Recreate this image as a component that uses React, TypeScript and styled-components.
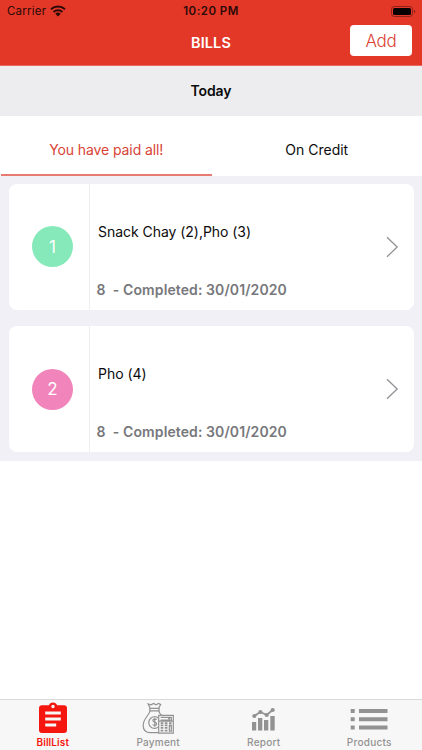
import React from "react";
import styled, { createGlobalStyle } from "styled-components";

const GlobalStyle = createGlobalStyle`
  * { box-sizing: border-box; }
  body { margin: 0; background: #fff; font-family: Inter, "Liberation Sans", sans-serif; }
`;

const Screen = styled.div`
  display: flex;
  flex-direction: column;
  width: 422px;
  height: 750px;
  overflow: hidden;
  background: #fff;
  color: #0b0b0c;
  white-space: nowrap;
`;

const Header = styled.header`
  height: 66px;
  background: #e33827;
  border-bottom: 1px solid #e8695d;
`;

const StatusBar = styled.div`
  display: grid;
  grid-template-columns: 1fr auto 1fr;
  align-items: center;
  height: 22px;
  padding: 0 6px 0 7px;
  color: #2b0a07;
`;

const Carrier = styled.div`
  display: flex;
  align-items: center;
  gap: 4px;
  font-size: 11.5px;
  letter-spacing: 0.22px;
`;

const Clock = styled.div`
  margin-right: 1px;
  font-size: 11.5px;
  font-weight: 600;
  letter-spacing: 0.45px;
`;

const BatterySlot = styled.div`
  display: flex;
  justify-content: flex-end;
`;

const NavBar = styled.div`
  display: grid;
  grid-template-columns: 1fr auto 1fr;
  height: 43px;
  padding: 3px 10px 0 0;
`;

const NavTitle = styled.h1`
  grid-column: 2;
  margin: 0 0 0 10px;
  padding-top: 9px;
  font-size: 14.5px;
  line-height: 18px;
  font-weight: 600;
  letter-spacing: 0.1px;
  color: #fff;
`;

const Button = styled.button`
  border: 0;
  padding: 0;
  background: none;
  font-family: inherit;
`;

const AddButton = styled(Button)`
  justify-self: end;
  width: 62px;
  height: 31px;
  padding-top: 1px;
  border-radius: 4px;
  background: #fff;
  color: #dc4134;
  font-size: 17px;
  font-weight: 300;
  letter-spacing: -0.2px;
`;

const DateBar = styled.div`
  display: flex;
  align-items: center;
  justify-content: center;
  height: 50px;
  padding-bottom: 1px;
  background: #ededef;
  font-size: 14px;
  font-weight: 600;
  letter-spacing: -0.1px;
`;

const Tabs = styled.div`
  display: grid;
  grid-template-columns: 1fr 1fr;
  height: 60px;
  padding-left: 1px;
`;

const Tab = styled(Button)<{ $active?: boolean }>`
  padding-top: 9px;
  font-size: 14px;
  letter-spacing: ${(p) => (p.$active ? "-0.1px" : "0")};
  color: ${(p) => (p.$active ? "#d94336" : "#0b0b0c")};
  border-bottom: 2px solid ${(p) => (p.$active ? "#e77a71" : "transparent")};
`;

const BillList = styled.main`
  display: flex;
  flex-direction: column;
  gap: 16.5px;
  padding: 7.5px 8.5px 8.5px;
  background: #f1f0f7;
`;

const Card = styled.article`
  display: grid;
  grid-template-columns: 81.5px 1fr 33.5px;
  height: 126px;
  border-radius: 8px;
  background: #fff;
`;

const NumberCell = styled.div`
  display: flex;
  align-items: center;
  padding-left: 23.5px;
  border-right: 1px solid #efeff2;
`;

const NumberBadge = styled.div<{ $color: string }>`
  display: flex;
  align-items: center;
  justify-content: center;
  width: 41px;
  height: 41px;
  border-radius: 50%;
  background: ${(p) => p.$color};
  color: #fff;
  font-size: 17px;
  font-weight: 400;
`;

const BillText = styled.div`
  display: flex;
  flex-direction: column;
  justify-content: space-between;
  padding: 39px 0 11px 6.5px;
`;

const Items = styled.div`
  padding-left: 1.5px;
  font-size: 14px;
  line-height: 18px;
  letter-spacing: -0.04px;
`;

const Completed = styled.div`
  white-space: pre;
  font-size: 14px;
  line-height: 18px;
  font-weight: 600;
  letter-spacing: 0.1px;
  color: #77777c;
`;

const ArrowCell = styled.div`
  display: flex;
  align-items: center;
  padding-left: 6px;
`;

const TabBar = styled.nav`
  display: grid;
  grid-template-columns: repeat(4, 1fr);
  height: 51px;
  margin-top: auto;
  border-top: 1px solid #d9d9da;
  background: #f7f7f7;
`;

const NavItem = styled(Button)<{ $active?: boolean }>`
  display: flex;
  flex-direction: column;
  align-items: center;
  gap: 2px;
  padding-top: 2px;
  color: ${(p) => (p.$active ? "#f5170f" : "#929292")};
`;

const NavLabel = styled.span<{ $active?: boolean }>`
  font-size: 10px;
  line-height: 12px;
  font-weight: ${(p) => (p.$active ? 600 : 500)};
  letter-spacing: ${(p) => (p.$active ? "0.1px" : "0.25px")};
`;

const Wifi = () => (
  <svg width="16" height="12" viewBox="0 0 16 12" fill="none" stroke="currentColor" strokeWidth="2">
    <path d="M1 4.3a10.3 10.3 0 0 1 14 0M3.6 7a6.5 6.5 0 0 1 8.8 0" />
    <path d="M5.3 8.8a4 4 0 0 1 5.4 0L8 11.6Z" fill="currentColor" stroke="none" />
  </svg>
);

const Battery = () => (
  <svg width="25" height="11" viewBox="0 0 25 11">
    <rect x=".5" y=".5" width="21" height="10" rx="2.8" fill="none" stroke="#8c2219" />
    <rect x="2" y="2" width="18" height="7" rx="1.5" fill="#080000" />
    <path d="M23 3.8q1.3.4 1.3 1.7T23 7.2Z" fill="#8c2219" />
  </svg>
);

const Chevron = () => (
  <svg width="13" height="22" viewBox="0 0 13 22" fill="none" stroke="#929296" strokeWidth="1.3">
    <path d="M1 1.2 11.2 11 1 20.8" />
  </svg>
);

const ClipboardIcon = () => (
  <svg width="28" height="32" viewBox="0 0 28 32">
    <path
      fill="currentColor"
      fillRule="evenodd"
      d="M3 3.2h7C10.5 1.4 12 .4 14 .4s3.500 1 4 2.800h7a3 3 0 0 1 3 3V28a3 3 0 0 1-3 3H3a3 3 0 0 1-3-3V6.200a3 3 0 0 1 3-3ZM14 2.800a1.700 1.700 0 1 0 0 3.400 1.700 1.700 0 0 0 0-3.400ZM6.200 9.500v3h15.600v-3Zm0 6v3h15.600v-3Zm0 6v3h11v-3Z"
    />
  </svg>
);

const PaymentIcon = () => (
  <svg width="32" height="32" viewBox="-0.4 0 32.4 32" fill="none" stroke="currentColor" strokeWidth="1.2">
    <path d="M7.900 6.200 5.800 1.800l3 .8 2.500-1.300 2.500 1.300 2.600-1.300 2.100 1.100-2.200 3.800ZM7.500 6.200h9.400v2.500H7.500Z" />
    <path d="M7.800 8.700C6.900 13.300.8 16.400.8 23.500c0 5.400 2.600 7.300 7.300 7.300h8.200M16.500 8.700c.5 2.100 1.600 3.300 2.900 4.500" />
    <path d="M16.300 16.200A5.900 5.900 0 1 0 16.300 25" />
    <path d="M14.500 17.700c-.6-.8-3.900-1.100-3.900.8 0 2.200 3.900 1.200 3.900 3.500 0 1.900-3.300 1.800-4.200.6M12.500 15.800v9" />
    <path fill="#f7f7f7" d="M16.500 13.400h14.800v17.900H16.500Z" />
    <path d="M18.500 15.300h10.800v2.900H18.500M26 16.700h2M16.500 19.200h14.800" />
    <path strokeWidth="1.700" strokeDasharray="2.700 1.500" d="M18.500 21.200h11M18.500 23.400h11M18.500 26h7.500M18.500 28.700h7.500" />
    <path d="M27.300 24h2v5.300h-2Z" />
  </svg>
);

const ReportIcon = () => (
  <svg width="23" height="32" viewBox="0 0 23 32" fill="currentColor">
    <path d="M0 20h4.200v8.500H0ZM6 16h4.300v12.500H6ZM12 18h4.300v10.500H12ZM18.300 14h4.400v14.500h-4.400Z" />
    <path d="m2.300 14 6.100-4 6.300 3 6-5" fill="none" stroke="currentColor" strokeWidth="1.900" />
    <circle cx="2.300" cy="14" r="2.100" />
    <circle cx="8.400" cy="10" r="2.100" />
    <circle cx="14.700" cy="13" r="2.100" />
    <circle cx="20.700" cy="8" r="2.100" />
  </svg>
);

const ProductsIcon = () => (
  <svg width="38" height="32" viewBox="0 0 38 32" fill="currentColor">
    <path d="M.7 7h4v4h-4ZM9 7h28.500v4H9ZM.7 15.200h4v4h-4ZM9 15.200h28.500v4H9ZM.7 23.400h4v4h-4ZM9 23.400h28.500v4H9Z" />
  </svg>
);

const bills = [
  { id: 1, color: "#85e9b9", items: "Snack Chay (2),Pho (3)" },
  { id: 2, color: "#f184ba", items: "Pho (4)" },
];

const sections = [
  { label: "BillList", Icon: ClipboardIcon, active: true },
  { label: "Payment", Icon: PaymentIcon, active: false },
  { label: "Report", Icon: ReportIcon, active: false },
  { label: "Products", Icon: ProductsIcon, active: false },
];

export default function App() {
  return (
    <>
      <GlobalStyle />
      <Screen>
        <Header>
          <StatusBar>
            <Carrier>Carrier <Wifi /></Carrier>
            <Clock>10:20 PM</Clock>
            <BatterySlot><Battery /></BatterySlot>
          </StatusBar>
          <NavBar>
            <NavTitle>BILLS</NavTitle>
            <AddButton>Add</AddButton>
          </NavBar>
        </Header>
        <DateBar>Today</DateBar>
        <Tabs>
          <Tab $active>You have paid all!</Tab>
          <Tab>On Credit</Tab>
        </Tabs>
        <BillList>
          {bills.map((bill) => (
            <Card key={bill.id}>
              <NumberCell><NumberBadge $color={bill.color}>{bill.id}</NumberBadge></NumberCell>
              <BillText>
                <Items>{bill.items}</Items>
                <Completed>{"8  - Completed: 30/01/2020"}</Completed>
              </BillText>
              <ArrowCell><Chevron /></ArrowCell>
            </Card>
          ))}
        </BillList>
        <TabBar>
          {sections.map(({ label, Icon, active }) => (
            <NavItem key={label} $active={active}>
              <Icon />
              <NavLabel $active={active}>{label}</NavLabel>
            </NavItem>
          ))}
        </TabBar>
      </Screen>
    </>
  );
}
